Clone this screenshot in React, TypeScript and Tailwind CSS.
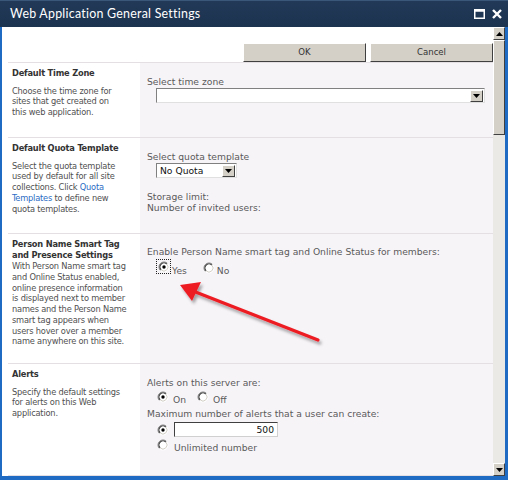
import React from "react";

const LEFT = { fontFamily: '"DejaVu Sans Condensed", "Liberation Sans", sans-serif' } as React.CSSProperties;
const RIGHT = { fontFamily: '"DejaVu Sans", Verdana, sans-serif' } as React.CSSProperties;

function RadioGlyph({ checked }: { checked?: boolean }) {
  return (
    <svg width="12" height="12" viewBox="0 0 12 12" className="shrink-0">
      <circle cx="6" cy="6" r="4.6" fill="#ffffff" />
      <path d="M2.46 9.54 A5 5 0 0 1 9.54 2.46" stroke="#808080" strokeWidth="1" fill="none" />
      <path d="M3.17 8.83 A4 4 0 0 1 8.83 3.17" stroke="#303030" strokeWidth="1.1" fill="none" />
      <path d="M2.46 9.54 A5 5 0 0 0 9.54 2.46" stroke="#ffffff" strokeWidth="1" fill="none" />
      <path d="M3.17 8.83 A4 4 0 0 0 8.83 3.17" stroke="#d4d0c8" strokeWidth="1" fill="none" />
      {checked && <circle cx="6" cy="6" r="1.7" fill="#000" />}
    </svg>
  );
}

function DropBtn() {
  return (
    <span className="flex items-center justify-center w-[13px] h-[12px] bg-[#d4d0c8] border border-t-white border-l-white border-r-[#404040] border-b-[#404040]">
      <svg width="7" height="4" viewBox="0 0 7 4"><path d="M0 0H7L3.5 4Z" fill="#000" /></svg>
    </span>
  );
}

function Lines({ lines }: { lines: React.ReactNode[] }) {
  return (
    <>
      {lines.map((l, i) => (
        <div key={i} className="whitespace-nowrap h-[10.75px]">{l}</div>
      ))}
    </>
  );
}

function Section({ h, title, desc, children }: { h: string; title: React.ReactNode; desc: React.ReactNode; children: React.ReactNode }) {
  return (
    <div className={`flex border-b border-[#e3dfe3] ${h}`}>
      <div className="w-[132px] shrink-0 bg-white pl-[4px] pr-[2px] pt-[5px] text-[9.2px] tracking-[-0.2px] leading-[10.75px] text-[#505050]" style={LEFT}>
        <div className="font-bold text-[#333] mb-[7px] leading-[10.5px]">{title}</div>
        <div>{desc}</div>
      </div>
      <div className="flex-1 bg-[#f7f4f8] pl-[7px] text-[9.2px] leading-[11px] text-[#5a5a5a]" style={RIGHT}>
        {children}
      </div>
    </div>
  );
}

const link = "text-[#2b6cc4]";

export default function App() {
  return (
    <div className="w-[508px] h-[480px] flex flex-col bg-[#1a4a85] overflow-hidden">
      {/* Title bar */}
      <div className="h-[27px] shrink-0 flex items-center justify-between pl-[10px] pr-[6px] bg-gradient-to-b from-[#223a57] to-[#1c3350] border-t border-[#3a5678]">
        <span className="text-white text-[12.4px] tracking-[0.25px]" style={{ fontFamily: 'Lato, "Open Sans", sans-serif' }}>
          Web Application General Settings
        </span>
        <div className="flex items-center gap-[7px]">
          <svg width="11" height="10" viewBox="0 0 11 10"><rect x="0.75" y="0.75" width="9.5" height="8.5" fill="none" stroke="#fff" strokeWidth="1.5" /><rect x="0.75" y="0.75" width="9.5" height="2" fill="#fff" /></svg>
          <svg width="10" height="10" viewBox="0 0 10 10"><path d="M1 1L9 9M9 1L1 9" stroke="#fff" strokeWidth="2.4" /></svg>
        </div>
      </div>
      {/* Body */}
      <div className="flex-1 flex pl-[2px] pr-[3px] pb-[4px] bg-[#1f6bc4]">
        <div className="flex-1 flex flex-col bg-white relative">
          <div className="h-[35px] flex items-end justify-end gap-[4px]">
            <button className="w-[123px] h-[19px] bg-[#d4d0c8] border border-t-white border-l-white border-r-[#404040] border-b-[#404040] text-[9.5px] text-[#333]" style={LEFT}>OK</button>
            <button className="w-[123px] h-[19px] bg-[#d4d0c8] border border-t-white border-l-white border-r-[#404040] border-b-[#404040] text-[9.5px] text-[#333]" style={LEFT}>Cancel</button>
          </div>
          <div className="ml-[6px] border-t border-[#e3dfe3] flex flex-col flex-1">
            <Section h="h-[75px]" title="Default Time Zone" desc={<Lines lines={["Choose the time zone for", "sites that get created on", "this web application."]} />}>
              <div className="pt-[13px]">Select time zone</div>
              <div className="ml-[9px] mt-[1px] w-[329px] h-[15px] bg-white border border-t-[#808080] border-l-[#808080] border-r-[#e0e0e0] border-b-[#e0e0e0] flex items-center justify-end pr-[1px]">
                <DropBtn />
              </div>
            </Section>
            <Section h="h-[96px]" title="Default Quota Template" desc={<Lines lines={["Select the quota template", "used by default for all site", <>collections. Click <span className={link}>Quota</span></>, <><span className={link}>Templates</span> to define new</>, "quota templates."]} />}>
              <div className="pt-[13px]">Select quota template</div>
              <div className="ml-[9px] mt-[1px] w-[81px] h-[15px] bg-white border border-t-[#808080] border-l-[#808080] border-r-[#e0e0e0] border-b-[#e0e0e0] flex items-center justify-between pl-[3px] pr-[1px] text-[#111]">
                <span>No Quota</span>
                <DropBtn />
              </div>
              <div className="mt-[13px]">Storage limit:</div>
              <div>Number of invited users:</div>
            </Section>
            <Section h="h-[130px]" title={<>Person Name Smart Tag<br />and Presence Settings</>} desc={<div className="-mt-[6px]"><Lines lines={["With Person Name smart tag", "and Online Status enabled,", "online presence information", "is displayed next to member", "names and the Person Name", "smart tag appears when", "users hover over a member", "name anywhere on this site."]} /></div>}>
              <div className="pt-[12px]">Enable Person Name smart tag and Online Status for members:</div>
              <div className="flex items-end ml-[9px] mt-[2px]">
                <span className="flex items-center justify-center w-[15px] h-[15px] border border-dotted border-[#222]">
                  <RadioGlyph checked />
                </span>
                <span className="ml-[1px] leading-[10px] -mb-[2px]">Yes</span>
                <span className="ml-[16px] flex items-end"><RadioGlyph /><span className="ml-[2px] leading-[10px] -mb-[2px]">No</span></span>
              </div>
            </Section>
            <Section h="flex-1" title="Alerts" desc={<Lines lines={["Specify the default settings", "for alerts on this Web", "application."]} />}>
              <div className="pt-[13px]">Alerts on this server are:</div>
              <div className="flex items-end ml-[10px] mt-[3px]">
                <RadioGlyph checked />
                <span className="ml-[4px] leading-[10px] -mb-[2px]">On</span>
                <span className="ml-[11px] flex items-end"><RadioGlyph /><span className="ml-[4px] leading-[10px] -mb-[2px]">Off</span></span>
              </div>
              <div className="mt-[5px]">Maximum number of alerts that a user can create:</div>
              <div className="flex items-center ml-[10px] mt-[3px]">
                <RadioGlyph checked />
                <div className="ml-[5px] w-[104px] h-[15px] bg-white border border-t-[#404040] border-l-[#404040] border-r-[#d0d0d0] border-b-[#d0d0d0] text-right pr-[3px] text-[#111] leading-[13px]">500</div>
              </div>
              <div className="flex items-end ml-[10px] mt-[2px]">
                <RadioGlyph />
                <span className="ml-[5px] leading-[10px] -mb-[2px]">Unlimited number</span>
              </div>
            </Section>
          </div>
          {/* red arrow annotation */}
          <svg className="absolute left-0 top-0 pointer-events-none" width="491" height="446" viewBox="2 27 491 446">
            <defs>
              <filter id="sh" x="-20%" y="-20%" width="140%" height="140%">
                <feDropShadow dx="2" dy="3" stdDeviation="1.5" floodColor="#000" floodOpacity="0.35" />
              </filter>
            </defs>
            <g filter="url(#sh)">
              <path d="M318 340 L193 291" stroke="#ec1c24" strokeWidth="3.2" strokeLinecap="round" />
              <path d="M180 285 L201 282 L192 301 Z" fill="#ec1c24" />
            </g>
          </svg>
        </div>
        {/* scrollbar */}
        <div className="w-[12px] flex flex-col bg-[#ebe9e5]">
          <div className="h-[13px] bg-[#d4d0c8] border border-t-white border-l-white border-r-[#404040] border-b-[#404040] flex items-center justify-center">
            <svg width="7" height="4" viewBox="0 0 7 4"><path d="M0 4H7L3.5 0Z" fill="#000" /></svg>
          </div>
          <div className="h-[95px] bg-[#d4d0c8] border border-t-white border-l-white border-r-[#404040] border-b-[#404040]" />
          <div className="flex-1" />
          <div className="h-[13px] bg-[#d4d0c8] border border-t-white border-l-white border-r-[#404040] border-b-[#404040] flex items-center justify-center">
            <svg width="7" height="4" viewBox="0 0 7 4"><path d="M0 0H7L3.5 4Z" fill="#000" /></svg>
          </div>
        </div>
      </div>
    </div>
  );
}
